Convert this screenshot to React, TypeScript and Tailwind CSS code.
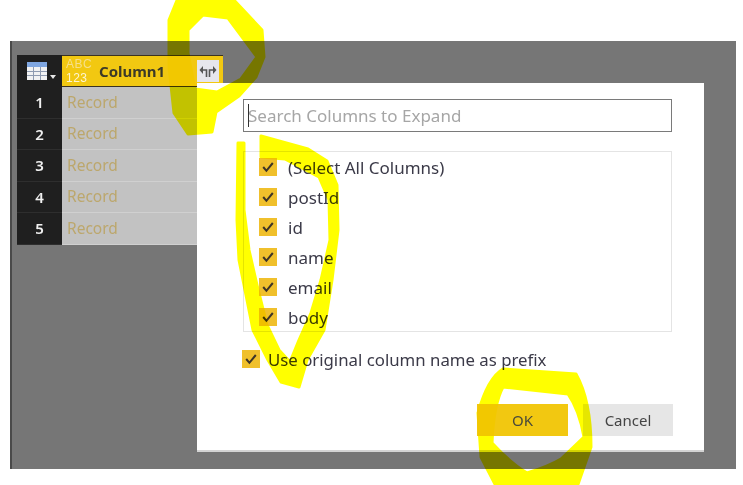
const rows = [1, 2, 3, 4, 5];
const columns = ["(Select All Columns)", "postId", "id", "name", "email", "body"];

const Check: React.FC = () => (
  <span className="flex size-[18px] shrink-0 items-center justify-center bg-[#f0c02c]">
    <svg width="14" height="14" viewBox="0 0 14 14" fill="none">
      <path d="M2.2 7 5.4 10.8 11.8 3" stroke="#3d3428" strokeWidth="2" />
    </svg>
  </span>
);

const TableIcon: React.FC = () => (
  <div className="flex items-end gap-[3px]">
    <svg width="20" height="18" viewBox="0 0 20 18">
      <rect width="20" height="5" fill="#7fa6e0" />
      <rect y="5" width="20" height="13" fill="#f2f2f2" />
      <path d="M0 9.5h20M0 13.5h20M6.5 5v13M13.5 5v13" stroke="#8f9bb0" strokeWidth="1" />
    </svg>
    <svg width="6" height="4" viewBox="0 0 6 4" className="mb-[1px]">
      <path d="M0 0h6L3 4z" fill="#e8e8e8" />
    </svg>
  </div>
);

const ExpandIcon: React.FC = () => (
  <svg width="18" height="14" viewBox="0 0 18 14" fill="none">
    <path d="M7.5 13V6H3" stroke="#555" strokeWidth="1.6" />
    <path d="M4 2 0.5 6 4 10z" fill="#555" />
    <path d="M10.5 13V6H15" stroke="#555" strokeWidth="1.6" />
    <path d="M14 2 17.5 6 14 10z" fill="#555" />
  </svg>
);

// the marker scribbles someone drew on top of the screenshot
const Scribbles: React.FC = () => (
  <svg
    width="743"
    height="485"
    viewBox="0 0 743 485"
    fill="#ffff00"
    fillRule="evenodd"
    stroke="#ffff00"
    strokeWidth="3"
    strokeLinejoin="round"
    className="pointer-events-none absolute top-0 left-0 mix-blend-multiply"
  >
    <path d="M178 -2 232 -2 262 30 264 57 256 77 239 96 216 112 212 132 188 134 174 113 169 67 169 20ZM188 30 188 53 195 89 217 92 241 79 257 57 228 18 203 15Z" />
    <path d="M238 143 237 220 239 260 243 280 253 330 268 360 281 382 299 387 307 360 324 330 332 280 338 230 337 185 327 161 308 149 261 136 261 157 285 159 319 177 329 200 330 240 321 280 311 313 299 340 290 362 279 350 267 325 257 285 249 250 244 210 244 143Z" />
    <path d="M478 413C483 395 491 376 503 369L576 374C585 390 591 415 591 447L576 490 498 490 481 457ZM503 387C497 398 493 420 492 443 504 456 515 466 527 473 540 469 551 465 561 459L584 437C581 420 575 404 568 394Z" />
  </svg>
);

export default function App() {
  return (
    <div className="relative h-[485px] w-[743px] overflow-hidden bg-white blur-[0.4px] font-['Noto_Sans',sans-serif]">
      <div className="pt-[41px] pl-[10px]">
        <div className="relative h-[428px] w-[726px] border-l-2 border-[#4a4a4a] bg-[#767676] pt-[14px] pl-[5px]">
          <div className="flex h-[32px]">
            <div className="flex h-[32px] w-[45px] items-center justify-center bg-[#1f1f1f] pl-[3px]">
              <TableIcon />
            </div>
            <div className="flex w-[161px] items-center border-y border-[#3a3220] bg-[#f2c811] pr-[4px] pl-[4px]">
              <div className="w-[28px] font-['Liberation_Sans',sans-serif] text-[12px] leading-[14px] tracking-[0.5px]">
                <div className="text-[#f6df8a]">ABC</div>
                <div className="text-[#fdf4d0]">123</div>
              </div>
              <span className="ml-[5px] flex-1 text-[15px] font-bold text-[#3c3a28]">Column1</span>
              <div className="flex size-[22px] items-center justify-center bg-[#e6e6ec]">
                <ExpandIcon />
              </div>
            </div>
          </div>
          {rows.map((row) => (
            <div key={row} className="flex h-[31.5px] w-[206px]">
              <div className="flex w-[45px] items-center justify-center border-b border-[#2e2e2e] bg-[#1f1f1f] text-[15px] font-semibold text-[#f0f0f0]">
                {row}
              </div>
              <div className="flex flex-1 items-center border-b border-[#d0d0d0] bg-[#c2c2c2] pl-[5px] text-[15.5px] text-[#bca76c]">
                Record
              </div>
            </div>
          ))}

          {/* dialog sits over the grid */}
          <div className="absolute top-[42px] left-[185px] flex h-[369px] w-[507px] flex-col border-b-2 border-[#d4d4d4] bg-white pt-[16px] pl-[46px] text-[#3b3a48]">
            <div className="relative flex h-[33px] w-[429px] items-center border border-[#7a7a7a] pl-[4px] text-[17px] text-[#a6a6a6]">
              <span className="absolute top-[4px] left-[4px] h-[23px] w-px bg-[#333]" />
              Search Columns to Expand
            </div>
            <div className="mt-[19px] flex h-[181px] w-[429px] flex-col gap-[12px] border border-[#e4e4e4] pt-[6px] pl-[15px]">
              {columns.map((name) => (
                <div key={name} className="flex h-[18px] items-center gap-[11px] text-[17px]">
                  <Check />
                  <span className="translate-y-[1px]">{name}</span>
                </div>
              ))}
            </div>
            <div className="mt-[18px] -ml-px flex h-[18px] items-center gap-[8px] text-[16.8px]">
              <Check />
              <span className="translate-y-[1px]">Use original column name as prefix</span>
            </div>
            <div className="mt-[36px] flex w-[430px] justify-end gap-[15px] text-[15px]">
              <div className="flex h-[32px] w-[91px] items-center justify-center bg-[#f2c811] text-[#4a4a3a]">OK</div>
              <div className="flex h-[32px] w-[90px] items-center justify-center bg-[#e6e6e6] text-[#444]">Cancel</div>
            </div>
          </div>
        </div>
      </div>
      <Scribbles />
    </div>
  );
}
